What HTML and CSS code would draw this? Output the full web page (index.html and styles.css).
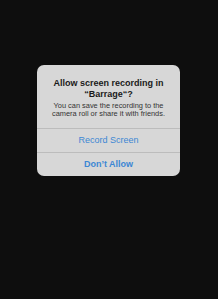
FILE: index.html
```html
<!DOCTYPE html>
<html>
<head>
<meta charset="utf-8">
<link rel="stylesheet" href="styles.css">
</head>
<body>
<div class="screen">
  <div class="alert">
    <div class="content">
      <div class="title">Allow screen recording in<br>“Barrage“?</div>
      <div class="message">You can save the recording to the<br>camera roll or share it with friends.</div>
    </div>
    <div class="btn">Record Screen</div>
    <div class="btn bold">Don’t Allow</div>
  </div>
</div>
</body>
</html>
```
FILE: styles.css
```css
html, body {
  margin: 0;
  padding: 0;
  background: #0e0e0e;
}
.screen {
  width: 218px;
  height: 299px;
  padding-top: 65px;
  box-sizing: border-box;
  padding-left: 37px;
}
.alert {
  width: 143px;
  background: #d7d7d7;
  border-radius: 7px;
  font-family: "Liberation Sans", Arial, sans-serif;
  overflow: hidden;
}
.content {
  padding: 13px 0 0;
  text-align: center;
  height: 63px;
  box-sizing: border-box;
}
.title {
  font-size: 9px;
  font-weight: bold;
  color: #1a1a1a;
  line-height: 11px;
}
.message {
  margin-top: 1.5px;
  font-size: 7.4px;
  color: #333;
  line-height: 8.5px;
}
.btn {
  border-top: 1px solid #bcbcbc;
  height: 23px;
  line-height: 23px;
  text-align: center;
  font-size: 9px;
  color: #3d87d4;
}
.bold {
  font-weight: bold;
}
```
